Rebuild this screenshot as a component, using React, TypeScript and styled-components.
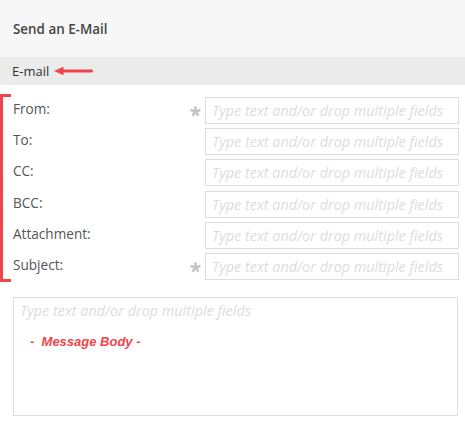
import React from "react";
import styled, { createGlobalStyle } from "styled-components";

const Global = createGlobalStyle`
  html, body { margin: 0; padding: 0; background: #fff; }
  body { font-family: "Open Sans", "Noto Sans", sans-serif; color: #444; }
  * { box-sizing: border-box; }
`;

const Page = styled.div`
  width: 465px;
  height: 423px;
  display: flex;
  flex-direction: column;
  background: #fff;
`;

const Header = styled.div`
  height: 57px;
  background: #f7f7f7;
  display: flex;
  align-items: center;
  padding-left: 13px;
  font-size: 13.4px;
  font-weight: 600;
  color: #444;
`;

const SectionBar = styled.div`
  height: 28px;
  background: #ebebeb;
  display: flex;
  align-items: center;
  gap: 5px;
  padding-left: 12px;
  font-size: 13px;
  color: #333;
`;

const Fields = styled.div`
  position: relative;
  display: flex;
  flex-direction: column;
  gap: 4px;
  padding: 12px 6px 0 13px;
`;

const Bracket = styled.div`
  position: absolute;
  left: 0;
  top: 9px;
  width: 11px;
  height: 188px;
  border: 3px solid #f0454b;
  border-right: none;
`;

const Row = styled.div`
  display: flex;
  align-items: center;
  height: 27.2px;
`;

const Label = styled.div`
  flex: 1;
  font-size: 13.6px;
  color: #555;
  align-self: flex-start;
  margin-top: 2px;
`;

const StarSlot = styled.span<{ $show: boolean }>`
  width: 11px;
  margin-right: 4px;
  display: flex;
  align-items: center;
  justify-content: center;
  padding-top: 2px;
  visibility: ${(p) => (p.$show ? "visible" : "hidden")};
`;

const Input = styled.div`
  width: 254px;
  height: 27px;
  border: 1px solid #ddd;
  display: flex;
  align-items: center;
  padding-left: 6px;
  font-size: 14.4px;
  font-style: italic;
  color: #ddd;
  white-space: nowrap;
  overflow: hidden;
`;

const Body = styled.div`
  margin: 17px 7px 0 13px;
  height: 119px;
  border: 1px solid #ddd;
  padding: 3px 6px;
  display: flex;
  flex-direction: column;
`;

const BodyPlaceholder = styled.div`
  font-size: 14.4px;
  font-style: italic;
  color: #ddd;
`;

const MessageBody = styled.div`
  margin-top: 14px;
  padding-left: 10px;
  font-family: "Liberation Sans", Arial, sans-serif;
  font-size: 13px;
  font-style: italic;
  font-weight: 700;
  color: #f0454b;
  white-space: pre;
`;

const Arrow = () => (
  <svg width="40" height="10" viewBox="0 0 40 10">
    <path d="M0 5 L9.5 0.8 L9.5 9.2 Z" fill="#f0454b" />
    <rect x="7" y="3.5" width="32" height="3" rx="1.5" fill="#f0454b" />
  </svg>
);

const Star = () => (
  <svg width="11" height="11" viewBox="-5.5 -5.5 11 11">
    {[0, 72, 144, 216, 288].map((a) => (
      <rect
        key={a}
        x="-1.3"
        y="-5.3"
        width="2.6"
        height="5.6"
        rx="1.2"
        fill="#c4c4c4"
        transform={`rotate(${a})`}
      />
    ))}
  </svg>
);

const PH = "Type text and/or drop multiple fields";

const rows: { label: string; req: boolean }[] = [
  { label: "From:", req: true },
  { label: "To:", req: false },
  { label: "CC:", req: false },
  { label: "BCC:", req: false },
  { label: "Attachment:", req: false },
  { label: "Subject:", req: true },
];

export default function App() {
  return (
    <Page>
      <Global />
      <Header>Send an E-Mail</Header>
      <SectionBar>
        E-mail
        <Arrow />
      </SectionBar>
      <Fields>
        <Bracket />
        {rows.map((r) => (
          <Row key={r.label}>
            <Label>{r.label}</Label>
            <StarSlot $show={r.req}>
              <Star />
            </StarSlot>
            <Input>{PH}</Input>
          </Row>
        ))}
      </Fields>
      <Body>
        <BodyPlaceholder>{PH}</BodyPlaceholder>
        <MessageBody>{"-  Message Body -"}</MessageBody>
      </Body>
    </Page>
  );
}
